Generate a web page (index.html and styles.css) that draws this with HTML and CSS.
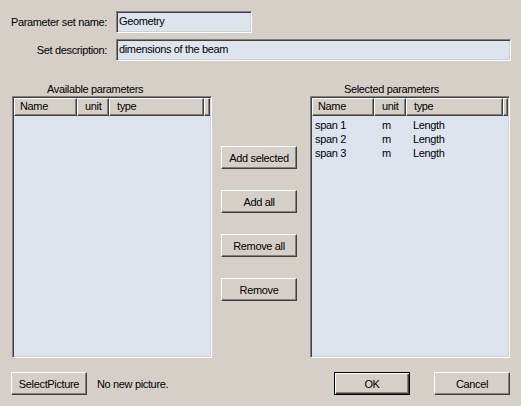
FILE: index.html
```html
<!DOCTYPE html>
<html>
<head>
<meta charset="utf-8">
<title>Parameter set</title>
<link rel="stylesheet" href="styles.css">
</head>
<body>
<div class="dialog">
  <div class="field-row">
    <label class="field-label">Parameter set name:</label>
    <div class="textbox textbox-short">Geometry</div>
  </div>
  <div class="field-row field-row-second">
    <label class="field-label">Set description:</label>
    <div class="textbox textbox-long">dimensions of the beam</div>
  </div>

  <div class="lists">
    <div class="list-panel list-available">
      <div class="panel-title">Available parameters</div>
      <div class="listview">
        <div class="lv-header">
          <div class="lv-col col-name">Name</div>
          <div class="lv-col col-unit">unit</div>
          <div class="lv-col col-type">type</div>
          <div class="lv-col col-rest"></div>
        </div>
      </div>
    </div>

    <div class="button-column">
      <button class="btn">Add selected</button>
      <button class="btn">Add all</button>
      <button class="btn">Remove all</button>
      <button class="btn">Remove</button>
    </div>

    <div class="list-panel list-selected">
      <div class="panel-title">Selected parameters</div>
      <div class="listview">
        <div class="lv-header">
          <div class="lv-col col-name">Name</div>
          <div class="lv-col col-unit">unit</div>
          <div class="lv-col col-type">type</div>
          <div class="lv-col col-rest"></div>
        </div>
        <div class="lv-rows">
          <div class="lv-row"><span class="cell col-name">span 1</span><span class="cell col-unit">m</span><span class="cell col-type">Length</span></div>
          <div class="lv-row"><span class="cell col-name">span 2</span><span class="cell col-unit">m</span><span class="cell col-type">Length</span></div>
          <div class="lv-row"><span class="cell col-name">span 3</span><span class="cell col-unit">m</span><span class="cell col-type">Length</span></div>
        </div>
      </div>
    </div>
  </div>

  <div class="footer">
    <button class="btn btn-picture">SelectPicture</button>
    <span class="picture-status">No new picture.</span>
    <span class="footer-spacer"></span>
    <button class="btn btn-default">OK</button>
    <button class="btn btn-cancel">Cancel</button>
  </div>
</div>
</body>
</html>
```

FILE: styles.css
```css
html, body {
  margin: 0;
  padding: 0;
}

body {
  width: 521px;
  height: 406px;
  overflow: hidden;
  background: #d4d0c8;
  font-family: "Liberation Sans", Arial, sans-serif;
  font-size: 11px;
  letter-spacing: -0.35px;
  color: #000;
}

.dialog {
  padding-top: 11px;
}

/* label + text field rows */
.field-row {
  display: flex;
  align-items: center;
  height: 22px;
}

.field-row-second {
  margin-top: 6px;
}

.field-label {
  width: 107px;
  text-align: right;
  margin-right: 9px;
  white-space: nowrap;
}

.textbox {
  box-sizing: border-box;
  height: 22px;
  padding: 3px 2px 0 2px;
  background: #dde4ee;
  border-top: 1px solid #808080;
  border-left: 1px solid #808080;
  border-right: 1px solid #ffffff;
  border-bottom: 1px solid #ffffff;
  box-shadow: inset 1px 1px 0 #404040, inset -1px -1px 0 #d4d0c8;
  white-space: nowrap;
}

.textbox-short {
  width: 136px;
}

.textbox-long {
  width: 395px;
}

/* the two list views with the buttons between them */
.lists {
  display: flex;
  margin-top: 21px;
  padding-left: 12px;
}

.list-panel {
  width: 200px;
}

.panel-title {
  height: 14px;
  line-height: 14px;
  white-space: nowrap;
}

.list-available .panel-title {
  padding-left: 35px;
}

.list-selected .panel-title {
  padding-left: 34px;
}

.listview {
  box-sizing: border-box;
  height: 262px;
  background: #dde4ee;
  border-top: 1px solid #808080;
  border-left: 1px solid #808080;
  border-right: 1px solid #ffffff;
  border-bottom: 1px solid #ffffff;
  box-shadow: inset 1px 1px 0 #404040, inset -1px -1px 0 #d4d0c8;
  padding: 1px;
}

.lv-header {
  display: flex;
  height: 18px;
}

.lv-col {
  box-sizing: border-box;
  height: 18px;
  line-height: 15px;
  background: #d4d0c8;
  border-top: 1px solid #ffffff;
  border-left: 1px solid #ffffff;
  border-right: 1px solid #404040;
  border-bottom: 1px solid #404040;
  box-shadow: inset -1px -1px 0 #808080;
  padding-left: 7px;
  white-space: nowrap;
  overflow: hidden;
}

.lv-col.col-name {
  padding-left: 5px;
}

.list-available .col-name { width: 63px; }
.list-available .col-unit { width: 32px; }
.list-available .col-type { width: 95px; }

.list-selected .col-name { width: 62px; }
.list-selected .col-unit { width: 32px; }
.list-selected .col-type { width: 97px; }

.lv-col.col-rest {
  flex: 1;
  padding: 0;
}

.lv-rows {
  padding-top: 2px;
}

.lv-row {
  display: flex;
  height: 14px;
  line-height: 14px;
}

.cell {
  box-sizing: border-box;
  white-space: nowrap;
}

.cell.col-name {
  padding-left: 3px;
}

.cell.col-unit {
  padding-left: 8px;
}

.cell.col-type {
  padding-left: 7px;
}

/* push buttons */
.btn {
  box-sizing: border-box;
  width: 76px;
  height: 23px;
  padding: 0;
  margin: 0;
  background: #d4d0c8;
  font: inherit;
  letter-spacing: inherit;
  color: #000;
  border-top: 1px solid #ffffff;
  border-left: 1px solid #ffffff;
  border-right: 1px solid #404040;
  border-bottom: 1px solid #404040;
  box-shadow: inset -1px -1px 0 #808080;
  text-align: center;
  white-space: nowrap;
}

.button-column {
  display: flex;
  flex-direction: column;
  gap: 21px;
  margin-left: 9px;
  margin-right: 13px;
  padding-top: 64px;
}

.footer {
  display: flex;
  align-items: center;
  margin-top: 14px;
  padding-left: 11px;
  padding-right: 11px;
}

.picture-status {
  margin-left: 10px;
  white-space: nowrap;
}

.footer-spacer {
  flex: 1;
}

.btn-default {
  border: 1px solid #000;
  box-shadow: inset 1px 1px 0 #ffffff, inset -1px -1px 0 #404040, inset -2px -2px 0 #808080;
}

.btn-cancel {
  margin-left: 24px;
}
```
